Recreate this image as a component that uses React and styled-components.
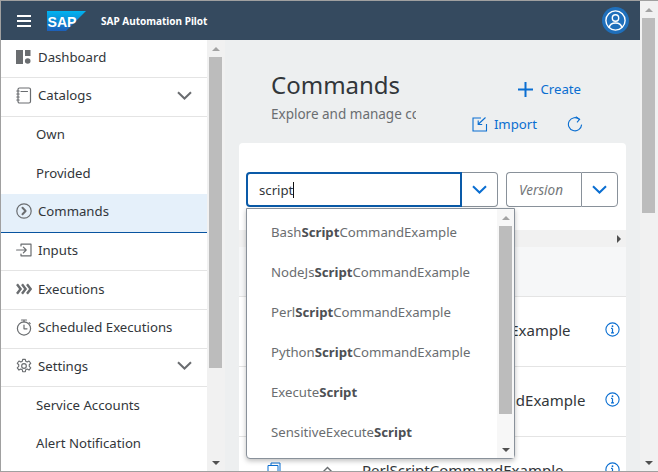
import React from "react"
import styled, { createGlobalStyle } from "styled-components"

const GlobalStyle = createGlobalStyle`
  html, body {
    margin: 0;
    padding: 0;
    overflow: hidden;
    background: #fff;
  }
  body {
    font-family: "Noto Sans", "Open Sans", Arial, sans-serif;
    color: #32363a;
  }
`

const Frame = styled.div`
  box-sizing: border-box;
  width: 658px;
  height: 472px;
  display: flex;
  border-top: 1px solid #a0a0a0;
  border-bottom: 1px solid #a0a0a0;
  border-left: 1px solid #a0a0a0;
  overflow: hidden;
`

const Content = styled.div`
  flex: 1;
  min-width: 0;
  display: flex;
  flex-direction: column;
`

const Shell = styled.header`
  height: 39px;
  flex: none;
  background: #354a5f;
  display: flex;
  align-items: center;
  padding: 0 11px 0 16px;
`

const ShellTitle = styled.span`
  margin-left: 14px;
  font-size: 10px;
  font-weight: 700;
  color: #fff;
  white-space: nowrap;
`

const Burger = styled.div`
  width: 14px;
  display: flex;
  flex-direction: column;
  gap: 3px;
  margin-right: 16px;
  i {
    display: block;
    height: 2px;
    background: #fff;
  }
`

const Avatar = styled.div`
  margin-left: auto;
  width: 27px;
  height: 27px;
  border-radius: 50%;
  background: #1f6fbb;
  display: flex;
  align-items: center;
  justify-content: center;
`

const Body = styled.div`
  flex: 1;
  min-height: 0;
  display: flex;
`

const Sidebar = styled.nav`
  width: 206px;
  flex: none;
  background: #fff;
  overflow: hidden;
`

const NavRow = styled.div`
  box-sizing: border-box;
  height: ${(p) => (p.$first ? "38px" : "38.67px")};
  display: flex;
  align-items: center;
  padding: 0 15px 3px ${(p) => (p.$sub ? "35px" : "15px")};
  gap: 6px;
  font-size: 13.2px;
  color: #32363a;
  background: ${(p) => (p.$active ? "#e5f0fa" : "#fff")};
  border-bottom: 1px solid ${(p) => (p.$active ? "#0854a0" : p.$sub ? "transparent" : "#e4e4e4")};
`

const NavLabel = styled.span`
  flex: 1;
  white-space: nowrap;
`

const BarShell = styled.div`
  width: ${(p) => p.$width}px;
  flex: none;
  box-sizing: border-box;
  padding-right: ${(p) => p.$inset || 0}px;
  background: ${(p) => p.$bg || "#f1f1f1"};
  display: flex;
  flex-direction: column;
  align-items: center;
`

const ArrowBox = styled.div`
  height: 17px;
  flex: none;
  display: flex;
  align-items: center;
  justify-content: center;
`

const Arrow = styled.i`
  display: block;
  width: 0;
  height: 0;
  border-left: 4.5px solid transparent;
  border-right: 4.5px solid transparent;
  ${(p) => (p.$down ? "border-top: 4.5px solid #505050;" : "border-bottom: 4.5px solid #a3a3a3;")}
`

const Track = styled.div`
  flex: 1;
  min-height: 0;
  width: 100%;
  display: flex;
  justify-content: center;
`

const Thumb = styled.div`
  width: 13px;
  height: ${(p) => p.$height}px;
  background: #bcbcbc;
`

const Main = styled.main`
  flex: 1;
  min-width: 0;
  background: #edeff0;
  display: flex;
  flex-direction: column;
  overflow: hidden;
`

const PageHead = styled.div`
  height: 103px;
  flex: none;
  box-sizing: border-box;
  display: flex;
  justify-content: space-between;
  padding: 28px 57px 0 46px;
`

const TitleBlock = styled.div`
  width: 145px;
  overflow: hidden;
`

const Title = styled.h1`
  margin: 0;
  font-size: 24px;
  font-weight: 400;
  line-height: 33px;
  color: #32363a;
`

const Subtitle = styled.div`
  margin-top: 3px;
  font-size: 13.5px;
  line-height: 20px;
  color: #6a6d70;
  white-space: nowrap;
`

const Actions = styled.div`
  display: flex;
  flex-direction: column;
  align-items: flex-end;
  gap: 15px;
  padding-top: 11px;
`

const ActionRow = styled.div`
  display: flex;
  align-items: center;
  gap: 30px;
`

const LinkButton = styled.div`
  display: flex;
  align-items: center;
  gap: ${(p) => p.$gap || 7}px;
  margin-right: ${(p) => p.$right || 0}px;
  font-size: 13.2px;
  line-height: 20px;
  color: #0a6ed1;
`

const Card = styled.section`
  flex: 1;
  min-height: 0;
  margin: 0 14px;
  background: #fff;
  border-radius: 4px 4px 0 0;
  display: flex;
  flex-direction: column;
`

const FilterRow = styled.div`
  height: 87px;
  flex: none;
  box-sizing: border-box;
  padding: 29px 8px 0 7px;
  display: flex;
  align-items: flex-start;
  gap: 8px;
`

const Combo = styled.div`
  position: relative;
  display: flex;
  height: 35px;
`

const Field = styled.div`
  box-sizing: border-box;
  width: ${(p) => p.$width}px;
  height: 35px;
  display: flex;
  align-items: center;
  padding-left: ${(p) => (p.$focus ? "11px" : "12px")};
  font-size: 13.2px;
  color: #32363a;
  background: #fff;
  border: ${(p) => (p.$focus ? "2px solid #0a5aa8" : "1px solid #89919a")};
  border-right-width: ${(p) => (p.$focus ? "2px" : "0")};
  border-radius: 4px 0 0 4px;
`

const Placeholder = styled.span`
  font-size: 13.5px;
  font-style: italic;
  color: #74777a;
`

const Caret = styled.i`
  display: inline-block;
  width: 1px;
  height: 16px;
  background: #111;
`

const ComboButton = styled.div`
  box-sizing: border-box;
  width: ${(p) => (p.$flush ? "36px" : "37px")};
  height: 35px;
  display: flex;
  align-items: center;
  justify-content: center;
  border: 1px solid #89919a;
  border-left: ${(p) => (p.$flush ? "0" : "1px solid #89919a")};
  border-radius: 0 4px 4px 0;
`

const Suggestions = styled.div`
  position: absolute;
  z-index: 5;
  top: 36px;
  left: 0;
  box-sizing: border-box;
  width: 269px;
  height: 251px;
  display: flex;
  background: #fff;
  border: 1px solid #89919a;
  border-radius: 0 0 4px 4px;
  box-shadow: 0 2px 5px rgba(0, 0, 0, 0.25);
`

const SuggestionList = styled.div`
  flex: 1;
  min-width: 0;
  padding-top: 3px;
  overflow: hidden;
`

const Suggestion = styled.div`
  height: 40px;
  display: flex;
  align-items: center;
  padding-left: 24px;
  font-size: 13.2px;
  color: #6a6d70;
  white-space: nowrap;
  b {
    font-weight: 700;
    color: #4d5054;
  }
`

const ScrollBand = styled.div`
  height: 17px;
  flex: none;
  background: #f1f1f1;
  display: flex;
  align-items: center;
  justify-content: flex-end;
  padding-right: 5px;
`

const RightArrow = styled.i`
  display: block;
  width: 0;
  height: 0;
  border-top: 4px solid transparent;
  border-bottom: 4px solid transparent;
  border-left: 4.5px solid #505050;
`

const TableHead = styled.div`
  height: 49px;
  flex: none;
  background: #f6f7f8;
  border-bottom: 1px solid #e4e4e4;
`

const TableRow = styled.div`
  box-sizing: border-box;
  height: 70px;
  flex: none;
  display: grid;
  grid-template-columns: 123px 1fr 21px;
  align-items: center;
  padding-bottom: 4px;
  font-size: 15px;
  color: #32363a;
  border-bottom: 1px solid #e4e4e4;
`

const RowIcons = styled.div`
  display: flex;
  align-items: center;
  gap: 40px;
  padding-left: 28px;
`

const strokes = {
  fill: "none",
  stroke: "#6a6d70",
  strokeWidth: 1.2,
  strokeLinecap: "round",
  strokeLinejoin: "round",
}

const SapLogo = () => (
  <svg width="40" height="20" viewBox="0 0 40 20">
    <defs>
      <linearGradient id="sapBlue" x1="0" y1="0" x2="0" y2="1">
        <stop offset="0" stopColor="#00b4f0" />
        <stop offset="1" stopColor="#1d5fb8" />
      </linearGradient>
    </defs>
    <polygon points="0,0 39,0 19,20 0,20" fill="url(#sapBlue)" />
    <text x="0.5" y="15.5" fontFamily="Liberation Sans" fontWeight="700" fontSize="15" fill="#fff" textLength="29" lengthAdjust="spacingAndGlyphs">
      SAP
    </text>
  </svg>
)

const UserIcon = () => (
  <svg width="21" height="21" viewBox="0 0 21 21" fill="none" stroke="#fff" strokeWidth="1.4">
    <circle cx="10.5" cy="10.5" r="9.6" />
    <circle cx="10.5" cy="8" r="3.2" />
    <path d="M4.2 17.5c.6-3.2 3-4.5 6.3-4.5s5.7 1.3 6.3 4.5" />
  </svg>
)

const DashboardIcon = () => (
  <svg width="16" height="15" viewBox="0 0 16 15" fill="#6a6d70">
    <rect x="0" y="0" width="7" height="14" />
    <rect x="9" y="0" width="5.5" height="6" />
    <circle cx="11.7" cy="11" r="2.8" />
  </svg>
)

const CatalogIcon = () => (
  <svg width="16" height="17" viewBox="0 0 16 17" {...strokes}>
    <rect x="2" y="1" width="12.5" height="15" rx="1.5" />
    <path d="M5 4.5h6.5M.8 4h2.4M.8 7h2.4M.8 10h2.4M.8 13h2.4" />
  </svg>
)

const CommandIcon = () => (
  <svg width="16" height="16" viewBox="0 0 16 16" {...strokes}>
    <circle cx="8" cy="8" r="7.2" />
    <path d="M6.5 4.8 9.6 8l-3.1 3.2" strokeWidth="2" />
  </svg>
)

const InputIcon = () => (
  <svg width="16" height="14" viewBox="0 0 16 14" {...strokes}>
    <path d="M5 3V1.2h10v11.6H5V11" />
    <path d="M.6 7H10M7.4 4.2 10.2 7l-2.8 2.8" />
  </svg>
)

const ExecutionIcon = () => (
  <svg width="16" height="12" viewBox="0 0 16 12" fill="none" stroke="#6a6d70" strokeWidth="2.4">
    <path d="M1 1.2 4.6 6 1 10.8M6 1.2 9.6 6 6 10.8M11 1.2 14.6 6 11 10.8" />
  </svg>
)

const TimerIcon = () => (
  <svg width="16" height="17" viewBox="0 0 16 17" {...strokes}>
    <circle cx="8" cy="9.5" r="6.6" />
    <path d="M5.5 1h5M8 1v2M8 6v3.8h3M13.2 3.6l1 1" />
  </svg>
)

const GearIcon = () => (
  <svg width="16" height="16" viewBox="0 0 24 24" fill="none" stroke="#6a6d70" strokeWidth="1.7" strokeLinejoin="round">
    <path d="M10 2h4l.6 3 2.2 1 2.7-1.5 2.6 3.4-2.2 2.2v2.4l2.2 2.2-2.6 3.4-2.7-1.5-2.2 1-.6 3h-4l-.6-3-2.2-1-2.7 1.5-2.6-3.4 2.2-2.2v-2.4L1.9 7.9l2.6-3.4L7.2 6l2.2-1z" />
    <circle cx="12" cy="12" r="3.5" />
  </svg>
)

const Chevron = ({ color = "#6a6d70" }) => (
  <svg width="15" height="9" viewBox="0 0 15 9" fill="none" stroke={color} strokeWidth="2">
    <path d="M1 1.2 7.5 7.5 14 1.2" />
  </svg>
)

const PlusIcon = () => (
  <svg width="15" height="15" viewBox="0 0 15 15" stroke="#0a6ed1" strokeWidth="2">
    <path d="M7.5 0v15M0 7.5h15" />
  </svg>
)

const ImportIcon = () => (
  <svg width="16" height="16" viewBox="0 0 16 16" fill="none" stroke="#0a6ed1" strokeWidth="1.1">
    <path d="M9 2H1v13h13.5V8" />
    <path d="M13.5 1.5 6.5 8M6.2 4.5v4h4" />
  </svg>
)

const RefreshIcon = () => (
  <svg width="16" height="16" viewBox="0 0 16 16" fill="none" stroke="#0a6ed1" strokeWidth="1.1">
    <path d="M12.5 3.4A6.6 6.6 0 1 0 14.6 8.6" />
    <path d="M8.8.8l3.8 2.6-2.6 3" />
  </svg>
)

const InfoIcon = () => (
  <svg width="15" height="15" viewBox="0 0 15 15" fill="none" stroke="#0a6ed1">
    <circle cx="7.5" cy="7.5" r="6.6" strokeWidth="1.1" />
    <path d="M7.5 6.4v4.4M6 6.4h1.5M6 10.8h3" strokeWidth="1.2" />
    <circle cx="7.5" cy="4.2" r=".9" fill="#0a6ed1" stroke="none" />
  </svg>
)

const CopyIcon = () => (
  <svg width="14" height="16" viewBox="0 0 14 16" fill="none" stroke="#0a6ed1" strokeWidth="1">
    <path d="M4 3V1h9v11h-2M1 3.5h10V15H1z" />
  </svg>
)

const UpChevron = () => (
  <svg width="13" height="8" viewBox="0 0 13 8" fill="none" stroke="#6a6d70" strokeWidth="1.4">
    <path d="M1 7 6.5 1.4 12 7" />
  </svg>
)

const ScrollBar = ({ width, thumb, bg, inset }) => (
  <BarShell $width={width} $bg={bg} $inset={inset}>
    <ArrowBox>
      <Arrow />
    </ArrowBox>
    <Track>
      <Thumb $height={thumb} />
    </Track>
    <ArrowBox>
      <Arrow $down />
    </ArrowBox>
  </BarShell>
)

const navItems = [
  { label: "Dashboard", icon: <DashboardIcon />, first: true },
  { label: "Catalogs", icon: <CatalogIcon />, open: true },
  { label: "Own", sub: true },
  { label: "Provided", sub: true, last: true },
  { label: "Commands", icon: <CommandIcon />, active: true },
  { label: "Inputs", icon: <InputIcon /> },
  { label: "Executions", icon: <ExecutionIcon /> },
  { label: "Scheduled Executions", icon: <TimerIcon /> },
  { label: "Settings", icon: <GearIcon />, open: true },
  { label: "Service Accounts", sub: true },
  { label: "Alert Notification", sub: true },
]

const suggestions = [
  ["Bash", "Script", "CommandExample"],
  ["NodeJs", "Script", "CommandExample"],
  ["Perl", "Script", "CommandExample"],
  ["Python", "Script", "CommandExample"],
  ["Execute", "Script", ""],
  ["SensitiveExecute", "Script", ""],
]

const rows = ["BashScriptCommandExample", "NodeJsScriptCommandExample", "PerlScriptCommandExample"]

const App = () => {
  return (
    <Frame>
      <GlobalStyle />
      <Content>
        <Shell>
          <Burger>
            <i />
            <i />
            <i />
          </Burger>
          <SapLogo />
          <ShellTitle>SAP Automation Pilot</ShellTitle>
          <Avatar>
            <UserIcon />
          </Avatar>
        </Shell>
        <Body>
          <Sidebar>
            {navItems.map((item) => (
              <NavRow key={item.label} $first={item.first} $sub={item.sub} $active={item.active}>
                {item.icon}
                <NavLabel>{item.label}</NavLabel>
                {item.open && <Chevron />}
              </NavRow>
            ))}
          </Sidebar>
          <ScrollBar width={18} thumb={311} inset={1} />
          <Main>
            <PageHead>
              <TitleBlock>
                <Title>Commands</Title>
                <Subtitle>Explore and manage commands</Subtitle>
              </TitleBlock>
              <Actions>
                <LinkButton $right={2}>
                  <PlusIcon />
                  Create
                </LinkButton>
                <ActionRow>
                  <LinkButton $gap={6}>
                    <ImportIcon />
                    Import
                  </LinkButton>
                  <RefreshIcon />
                </ActionRow>
              </Actions>
            </PageHead>
            <Card>
              <FilterRow>
                <Combo>
                  <Field $width={216} $focus>
                    script
                    <Caret />
                  </Field>
                  <ComboButton $flush>
                    <Chevron color="#0a6ed1" />
                  </ComboButton>
                  <Suggestions>
                    <SuggestionList>
                      {suggestions.map(([before, match, after]) => (
                        <Suggestion key={before}>
                          {before}
                          <b>{match}</b>
                          {after}
                        </Suggestion>
                      ))}
                    </SuggestionList>
                    <ScrollBar width={17} thumb={188} bg="#f7f7f7" />
                  </Suggestions>
                </Combo>
                <Combo>
                  <Field $width={75}>
                    <Placeholder>Version</Placeholder>
                  </Field>
                  <ComboButton>
                    <Chevron color="#0a6ed1" />
                  </ComboButton>
                </Combo>
              </FilterRow>
              <ScrollBand>
                <RightArrow />
              </ScrollBand>
              <TableHead />
              {rows.map((name) => (
                <TableRow key={name}>
                  <RowIcons>
                    <CopyIcon />
                    <UpChevron />
                  </RowIcons>
                  <span>{name}</span>
                  <InfoIcon />
                </TableRow>
              ))}
            </Card>
          </Main>
        </Body>
      </Content>
      <ScrollBar width={18} thumb={195} inset={1} />
    </Frame>
  )
}

export default App
